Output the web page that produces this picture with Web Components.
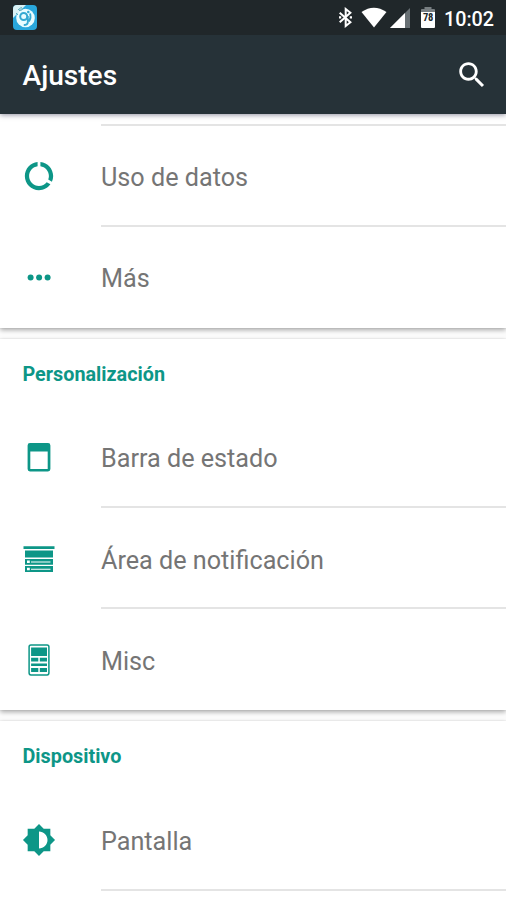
<!DOCTYPE html>
<html lang="es">
<head>
<meta charset="utf-8">
<title>Ajustes</title>
<style>
html,body{margin:0;height:900px;overflow:hidden;background:#fff;font-family:Roboto,"Noto Sans",sans-serif}
</style>
</head>
<body>
<settings-screen>
  <status-bar slot="top" time="10:02" battery="78"></status-bar>
  <app-bar slot="top">Ajustes</app-bar>
  <settings-card>
    <list-spacer></list-spacer>
    <settings-row icon="data">Uso de datos</settings-row>
    <settings-row icon="more" last>Más</settings-row>
  </settings-card>
  <settings-card heading="Personalización">
    <settings-row icon="statusbar">Barra de estado</settings-row>
    <settings-row icon="shade">Área de notificación</settings-row>
    <settings-row icon="misc" last>Misc</settings-row>
  </settings-card>
  <settings-card heading="Dispositivo">
    <settings-row icon="display">Pantalla</settings-row>
    <list-spacer plain></list-spacer>
  </settings-card>
</settings-screen>
<script>
const ICONS = {
  data: '<svg viewBox="0 0 24 24"><path d="M13 2.05v3.03c3.39.49 6 3.39 6 6.92 0 .9-.18 1.75-.48 2.54l2.6 1.53c.56-1.24.88-2.62.88-4.07 0-5.18-3.95-9.45-9-9.95zM12 19c-3.87 0-7-3.13-7-7 0-3.53 2.61-6.43 6-6.92V2.05c-5.06.5-9 4.76-9 9.95 0 5.52 4.47 10 9.99 10 3.31 0 6.24-1.61 8.06-4.09l-2.6-1.53C16.17 17.98 14.21 19 12 19z"/></svg>',
  more: '<svg viewBox="0 0 34 34"><circle cx="8.6" cy="17.500" r="3"/><circle cx="17.1" cy="17.500" r="3"/><circle cx="25.6" cy="17.500" r="3"/></svg>',
  statusbar: '<svg viewBox="0 0 34 34"><path fill-rule="evenodd" d="M8 3h18a2.4 2.4 0 0 1 2.400 2.400V29a2.400 2.400 0 0 1-2.400 2.400H8A2.400 2.400 0 0 1 5.600 29V5.400A2.400 2.400 0 0 1 8 3zM8.300 11.600V29H25.700V11.600z"/></svg>',
  shade: '<svg viewBox="0 0 34 34"><path fill-rule="evenodd" d="M1.500 4.200h31v2.900h-31zM3 8.600h28v6.800H3zM3 17h28v5.700H3zM5 18.500v2.500h2.800v-2.500zM9 19.500v1h19.500v-1zM3 24.100h28v5.900H3zM5 25.700v2.600h2.800v-2.600zM9 26.700v1h19.500v-1z"/></svg>',
  misc: '<svg viewBox="0 0 34 34"><rect x="7.100" y="1.900" width="19.800" height="30" rx="1.800" fill="none" stroke="#0d9687" stroke-width="1.500"/><path d="M9.100 4.400h15.900v8.500H9.100zM9.100 14.800h7.200v3.700H9.100zM17.800 14.800H25v3.700h-7.200zM9.100 20.600H25v2.300H9.100zM9.100 25h7.200v4H9.100zM17.800 25H25v4h-7.200z"/></svg>',
  display: '<svg viewBox="0 0 24 24"><path d="M20 15.310L23.310 12 20 8.690V4h-4.690L12 .690 8.690 4H4v4.690L.690 12 4 15.310V20h4.690L12 23.310 15.310 20H20v-4.690zM12 18V6c3.310 0 6 2.690 6 6s-2.690 6-6 6z"/></svg>'
};

class BaseElement extends HTMLElement {
  connectedCallback() {
    if (!this.shadowRoot) this.attachShadow({mode: 'open'}).innerHTML = this.render();
  }
}

customElements.define('settings-screen', class extends BaseElement {
  render() {
    return `<style>
      :host{display:flex;flex-direction:column;height:900px;overflow:hidden;background:#fdfdfd}
      .top{flex:none;position:relative;z-index:1;box-shadow:0 1px 5px rgba(40,40,70,.5)}
      main{flex:1;display:flex;flex-direction:column;gap:11px;overflow:hidden}
    </style><div class="top"><slot name="top"></slot></div><main><slot></slot></main>`;
  }
});

customElements.define('status-bar', class extends BaseElement {
  render() {
    return `<style>
      :host{display:flex;align-items:center;box-sizing:border-box;height:35px;padding:0 12px 0 13px;background:#20272a;color:#fff}
      svg{display:block;flex:none}
      .app{margin-right:auto}
      .bt{margin-right:9px}.wifi{margin-right:3px}.cell{margin-right:11px}
      .battery{display:grid;width:14px;height:22px;margin:0 9px 2px 0}
      .battery>*{grid-area:1/1}
      .level{font:700 10.500px/22px "Roboto Condensed",Roboto,sans-serif;color:#20272a;text-align:center;letter-spacing:-.4px;padding-top:1px;z-index:1}
      time{font-size:19.700px;font-weight:500;line-height:35px;width:50px;white-space:nowrap;padding-top:3px}
    </style>
    <svg class="app" width="24" height="25" viewBox="0 0 24 25">
      <rect width="24" height="25" rx="4" fill="#29a7dc"/>
      <path d="M0 13V4a4 4 0 0 1 4-4h9z" fill="#d9f0f4"/>
      <circle cx="12.500" cy="13" r="9.300" fill="#e9fcff"/>
      <circle cx="10.700" cy="11.500" r="3.500" fill="none" stroke="#35a9d2" stroke-width="2"/>
      <path d="M14.800 11v6q0 3-4 3M17 8.500q1.500 4-1.200 8" fill="none" stroke="#35a9d2" stroke-width="1.900"/>
      <circle cx="15.300" cy="7" r="1.300" fill="#35a9d2"/>
      <path d="M3 8l2 2M5 4l2 2M6.500 3.500l2-1 1 2-2 1z" fill="none" stroke="#62aebd" stroke-width="1"/>
    </svg>
    <svg class="bt" width="13" height="21" viewBox="0 0 13 21"><path d="M.700 5.700L11.400 15.300 6.700 19V2L11.400 5.700.700 15.300" fill="none" stroke="#fff" stroke-width="2"/><path d="M0 9.300h2.200v2.200H0zM10.800 9.300H13v2.200h-2.200z" fill="#fff"/></svg>
    <svg class="wifi" width="26" height="21" viewBox="0 0 26 21"><path d="M.500 5Q12.800-3.500 25.500 5L13 20.500z" fill="#fff"/></svg>
    <svg class="cell" width="20" height="20" viewBox="0 0 20 20"><path d="M0 20L20 0v20z" fill="#687074"/><path d="M0 20L15 5v15z" fill="#fff"/></svg>
    <div class="battery"><svg width="14" height="22" viewBox="0 0 14 22"><path d="M0 5V3.500Q0 3 1 3h2.500V1h7v2H13q1 0 1 1v3H0z" fill="#777e81"/><path d="M0 6h14v15q0 1-1 1H1q-1 0-1-1z" fill="#fff"/></svg><span class="level">${this.getAttribute('battery')}</span></div>
    <time>${this.getAttribute('time')}</time>`;
  }
});

customElements.define('app-bar', class extends BaseElement {
  render() {
    return `<style>
      :host{display:flex;align-items:center;justify-content:space-between;box-sizing:border-box;height:79px;padding:0 17px 0 22.500px;background:#263238;color:#fff;font-size:28.100px;font-weight:500}
      h1{font:inherit;margin:2px 0 0}
      svg{display:block}
    </style><h1><slot></slot></h1>
    <svg width="34" height="34" viewBox="0 0 24 24"><path fill="#fff" d="M15.500 14h-.790l-.280-.270C15.410 12.590 16 11.110 16 9.500 16 5.910 13.090 3 9.500 3S3 5.910 3 9.500 5.910 16 9.500 16c1.610 0 3.090-.590 4.230-1.570l.270.280v.790l5 4.990L20.490 19l-4.990-5zm-6 0C7.010 14 5 11.990 5 9.500S7.010 5 9.500 5 14 7.010 14 9.500 11.990 14 9.500 14z"/></svg>`;
  }
});

customElements.define('settings-card', class extends BaseElement {
  render() {
    const heading = this.getAttribute('heading');
    return `<style>
      :host{display:block;flex:none;background:#fff;box-shadow:0 2px 5px rgba(0,0,0,.34),0 0 1px rgba(0,0,0,.14)}
      h2{margin:0;box-sizing:border-box;height:68px;padding:3px 22.500px 0;font-size:19.800px;line-height:66px;font-weight:700;color:#0d9687}
    </style>${heading ? `<h2>${heading}</h2>` : ''}<slot></slot>`;
  }
});

customElements.define('list-spacer', class extends BaseElement {
  render() {
    return `<style>
      :host{display:block;box-sizing:border-box;height:11.500px;margin-left:101px;border-bottom:2px solid #e4e4e4}
      :host([plain]){border:0}
    </style>`;
  }
});

customElements.define('settings-row', class extends BaseElement {
  render() {
    return `<style>
      :host{display:grid;grid-template-columns:101px 1fr;height:101.200px;color:#757575;font-size:25.200px}
      .icon{display:flex;align-items:center;padding-left:22px}
      svg{display:block;width:34px;height:34px;fill:#0d9687}
      .label{display:flex;align-items:center;box-sizing:border-box;padding-top:4.700px;border-bottom:2px solid #e4e4e4}
      :host([last]) .label{border-color:transparent}
    </style><div class="icon">${ICONS[this.getAttribute('icon')]}</div><div class="label"><slot></slot></div>`;
  }
});
</script>
</body>
</html>
